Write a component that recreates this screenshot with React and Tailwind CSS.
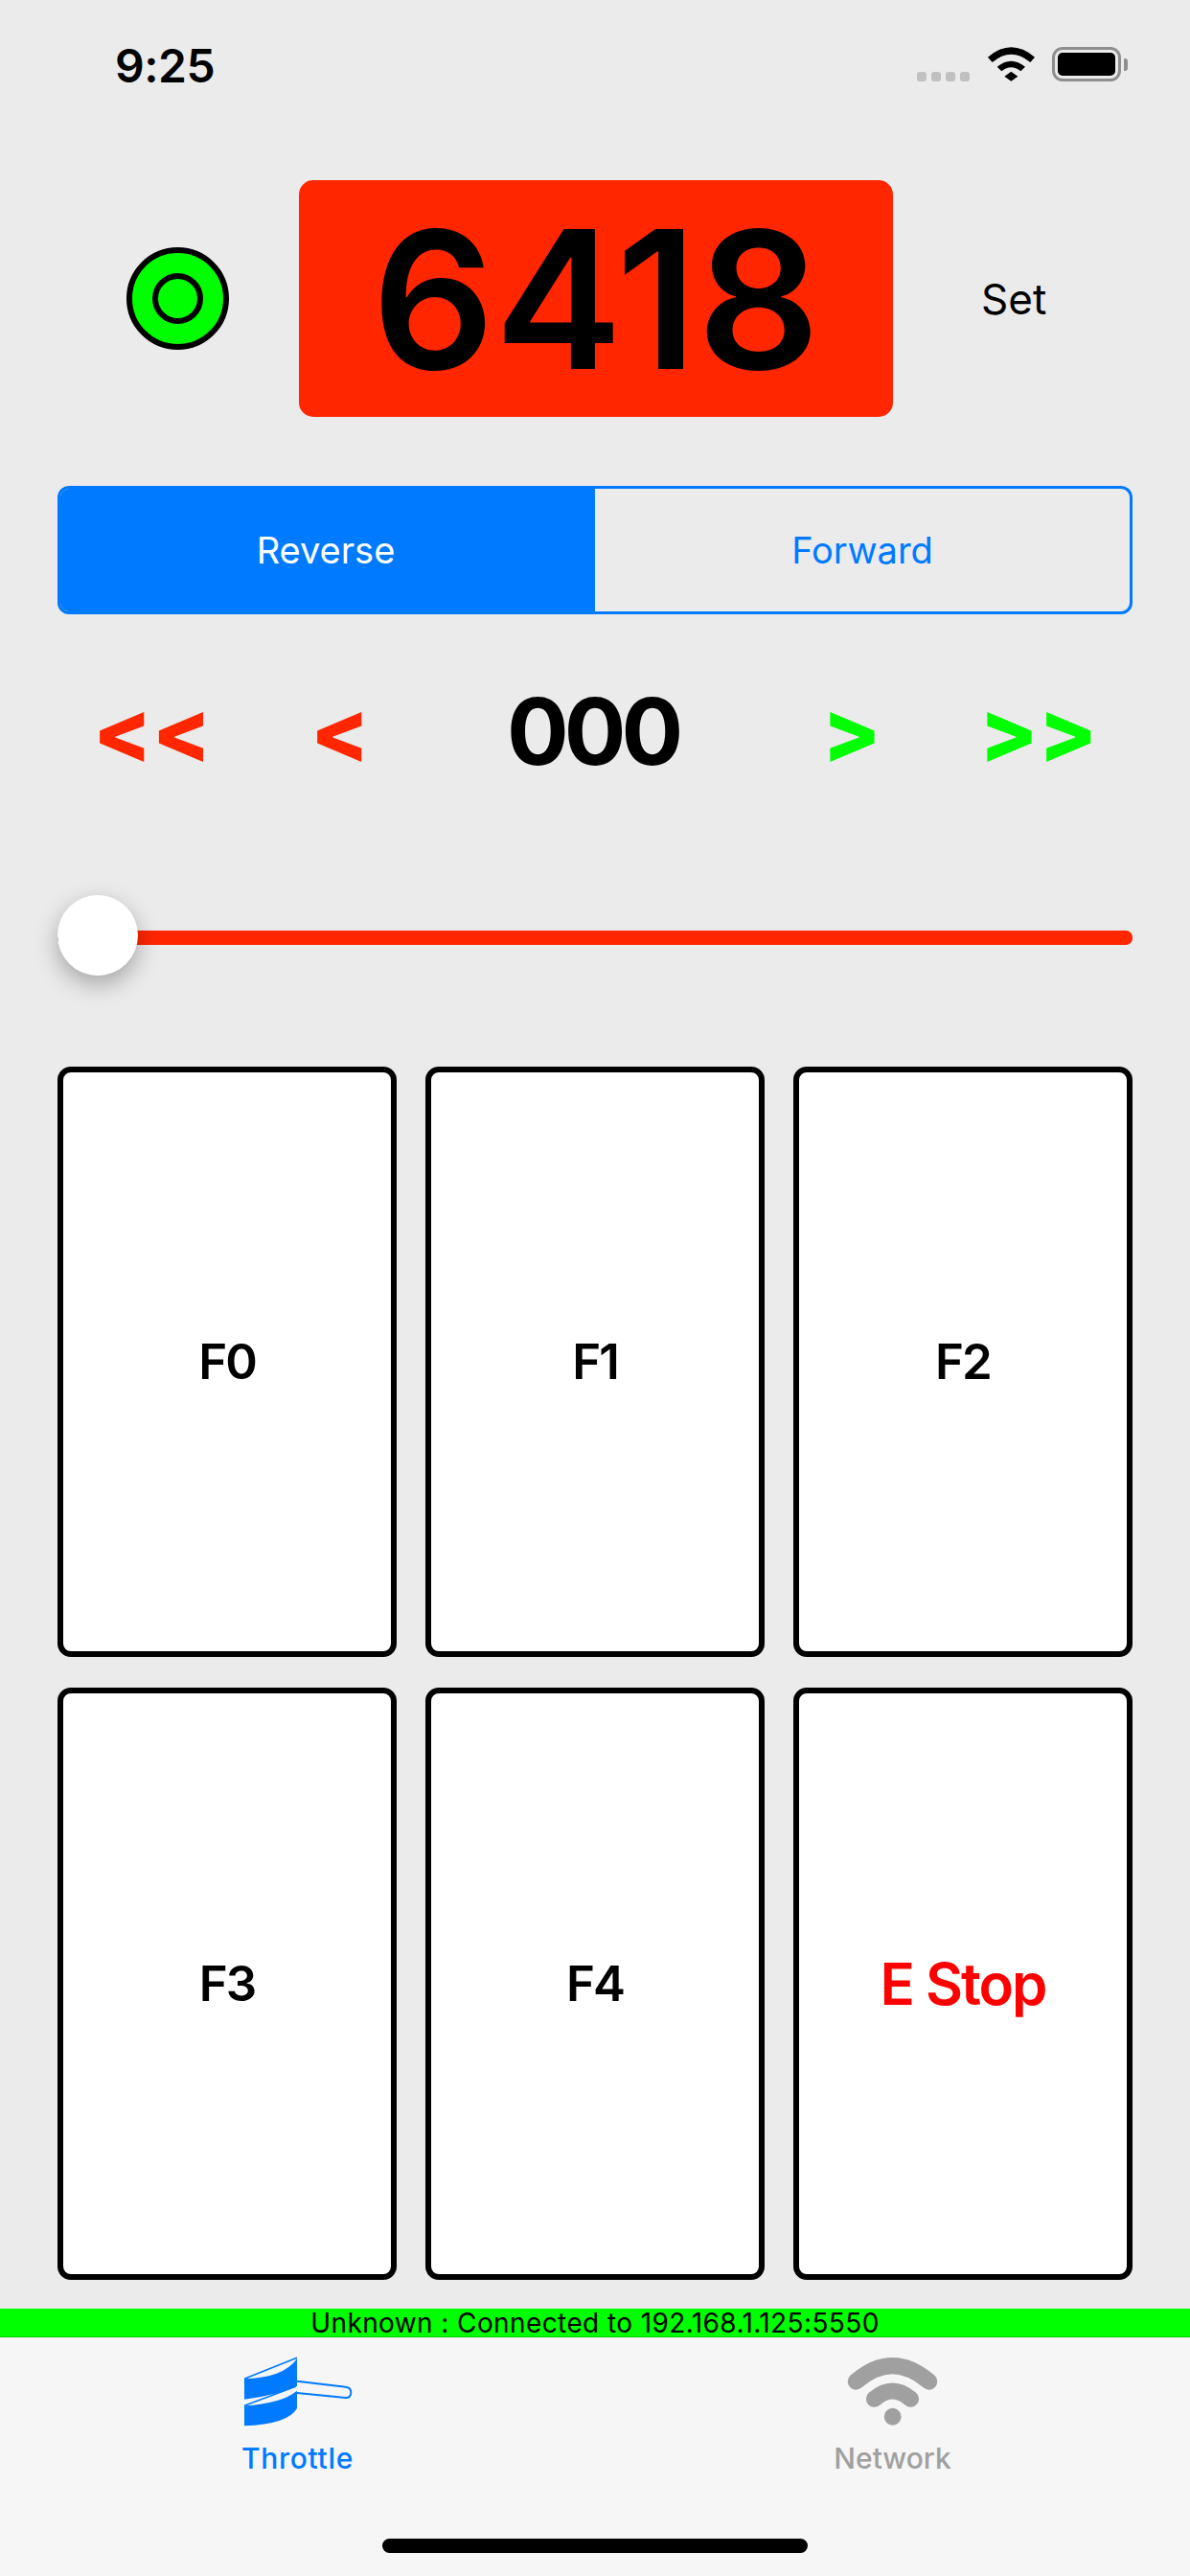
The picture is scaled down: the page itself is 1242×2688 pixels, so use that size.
const SANS = "font-['Inter','Liberation_Sans',sans-serif]";

function StatusBar() {
  return (
    <div className="h-[188px] flex items-start justify-between pl-[120px] pr-[65px] pt-[42px]">
      <span className="text-[48px] leading-[54px] font-semibold tracking-[-0.5px] text-black">9:25</span>
      <div className="flex items-start pt-[7px]">
        <div className="flex gap-[5px] pt-[26px]">
          <span className="w-[10px] h-[10px] rounded-[3px] bg-[#c0c0c0]" />
          <span className="w-[10px] h-[10px] rounded-[3px] bg-[#c0c0c0]" />
          <span className="w-[10px] h-[10px] rounded-[3px] bg-[#c0c0c0]" />
          <span className="w-[10px] h-[10px] rounded-[3px] bg-[#c0c0c0]" />
        </div>
        <svg className="ml-[18px]" width="50" height="36" viewBox="300 58 150 108">
          <path d="M303 90 Q376 28 450 90 L436 106 Q376 56 317 106 Z" fill="#000" />
          <path d="M332 120 Q376 84 420 120 L406 134 Q376 110 346 134 Z" fill="#000" />
          <path d="M355 150 L376 135 L397 150 L376 165 Z" fill="#000" />
        </svg>
        <div className="ml-[18px] w-[72px] h-[36px] rounded-[11px] border-[3px] border-[#8e8e8e] p-[3px]">
          <div className="w-full h-full rounded-[5px] bg-black" />
        </div>
        <span className="ml-[3px] mt-[12px] w-[4px] h-[13px] rounded-r-[3px] bg-[#8e8e8e]" />
      </div>
    </div>
  );
}

function Hero() {
  return (
    <div className="h-[247px] flex items-center pl-[132px]">
      <div className="w-[107px] h-[107px] rounded-full border-[6px] border-black bg-[#00ff00] flex items-center justify-center">
        <div className="w-[53px] h-[53px] rounded-full border-[6px] border-black" />
      </div>
      <div className="ml-[73px] w-[620px] h-[247px] rounded-[15px] bg-[#ff2600] flex items-center justify-center">
        <span className="text-[200px] leading-none font-semibold text-black">6418</span>
      </div>
      <span className="ml-[92px] text-[44px] leading-none text-black">Set</span>
    </div>
  );
}

function Segments() {
  return (
    <div className="mt-[72px] mx-[60px] h-[134px] flex rounded-[12px] border-[3px] border-[#007aff] overflow-hidden">
      <div className="w-[558px] pr-[4px] bg-[#007aff] text-white flex items-center justify-center text-[38px]">Reverse</div>
      <div className="flex-1 text-[#007aff] flex items-center justify-center text-[38px]">Forward</div>
    </div>
  );
}

function Stepper() {
  return (
    <div className="mt-[74px] h-[96px] flex items-center text-[90px] leading-none font-extrabold">
      <span className="w-[324px] pl-[97px] text-[#ff2600]">&lt;&lt;</span>
      <span className="w-[205px] text-[#ff2600]">&lt;</span>
      <span className="w-[329px] text-[96px] font-bold tracking-[-5px] text-black">000</span>
      <span className="w-[164px] text-[#00ff00]">&gt;</span>
      <span className="text-[#00ff00]">&gt;&gt;</span>
    </div>
  );
}

function Slider() {
  return (
    <div className="mt-[123px] mx-[60px] h-[84px] relative flex items-center">
      <div className="w-full h-[15px] mt-[5px] rounded-[7px] bg-[#ff2600]" />
      <div className="absolute left-0 top-0 w-[84px] h-[84px] rounded-full bg-white shadow-[0_9px_24px_rgba(0,0,0,0.3)]" />
    </div>
  );
}

function Card({ label, danger }) {
  return (
    <div className={`rounded-[14px] border-[6px] border-black bg-white flex items-center justify-center font-semibold ${danger ? "text-[#ff0000] text-[60px] tracking-[-2px]" : "text-black text-[51px] tracking-[-2px]"}`}>
      {label}
    </div>
  );
}

function Grid() {
  return (
    <div className="mt-[95px] mx-[60px] grid grid-cols-3 gap-x-[30px] gap-y-[32px] grid-rows-[616px_618px]">
      <Card label="F0" />
      <Card label="F1" />
      <Card label="F2" />
      <Card label="F3" />
      <Card label="F4" />
      <Card label="E Stop" danger />
    </div>
  );
}

function ThrottleIcon() {
  return (
    <svg width="114" height="74" viewBox="100 58 342 222">
      <path d="M103 128 Q225 125 268 65 L268 150 Q200 180 103 192 Z" fill="#007aff" />
      <path d="M103 128 L268 62" fill="none" stroke="#007aff" strokeWidth="5" />
      <path d="M103 212 Q220 205 268 165 L268 220 Q240 270 103 275 Z" fill="#007aff" />
      <path d="M103 212 L264 152" fill="none" stroke="#007aff" strokeWidth="5" />
      <path d="M268 135 L420 153 Q437 155 437 170 Q437 188 420 187 L268 172" fill="none" stroke="#007aff" strokeWidth="6" />
    </svg>
  );
}

function NetworkIcon() {
  return (
    <svg width="96" height="72" viewBox="70 58 288 218">
      <path d="M97 137 Q212 37 328 137" fill="none" stroke="#a0a0a0" strokeWidth="52" strokeLinecap="round" />
      <path d="M155 192 Q212 142 270 192" fill="none" stroke="#a0a0a0" strokeWidth="52" strokeLinecap="round" />
      <circle cx="213" cy="248" r="27" fill="#a0a0a0" />
    </svg>
  );
}

function TabBar() {
  return (
    <div className="flex-1 relative bg-[#f6f6f6]">
      <div className="flex">
        <div className="flex-1 flex flex-col items-center pt-[20px] text-[#007aff]">
          <ThrottleIcon />
          <span className="mt-[14px] text-[30px] leading-[36px] font-medium tracking-[0.7px]">Throttle</span>
        </div>
        <div className="flex-1 flex flex-col items-center pt-[20px] text-[#a0a0a0]">
          <NetworkIcon />
          <span className="mt-[16px] text-[30px] leading-[36px] font-medium">Network</span>
        </div>
      </div>
      <div className="absolute left-[399px] top-[210px] w-[444px] h-[15px] rounded-full bg-black" />
    </div>
  );
}

export default function App() {
  return (
    <div className={`w-[1242px] h-[2688px] flex flex-col bg-[#ebebeb] ${SANS}`}>
      <StatusBar />
      <Hero />
      <Segments />
      <Stepper />
      <Slider />
      <Grid />
      <div className="mt-[30px] h-[30px] pt-[1px] bg-[#00ff00] border-b-[1px] border-[#00c800] flex items-center justify-center text-[28px] tracking-[0.4px] leading-none text-black">
        Unknown : Connected to 192.168.1.125:5550
      </div>
      <TabBar />
    </div>
  );
}
